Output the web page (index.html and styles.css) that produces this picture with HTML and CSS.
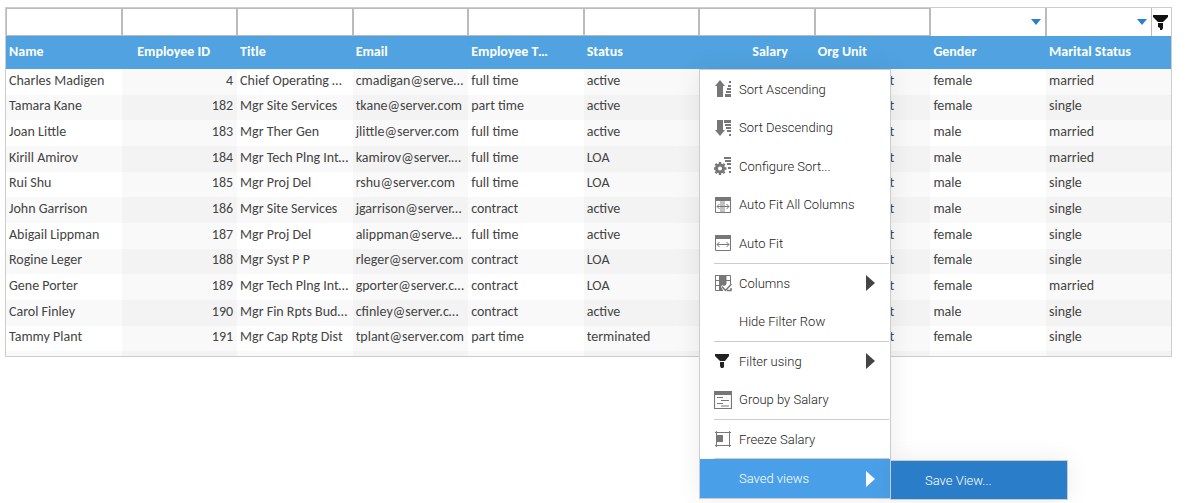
FILE: index.html
```html
<!DOCTYPE html>
<html lang="en">
<head>
    <meta charset="UTF-8">
    <meta name="viewport" content="width=device-width, initial-scale=1.0">
    <title>Employees</title>
    <link rel="stylesheet" href="styles.css">
</head>
<body>
    <div class="grid-wrapper">
        <div class="grid">
            <table>
                <colgroup>
                    <col span="9">
                    <col class="last-col">
                </colgroup>
                <thead>
                    <tr class="filter-row">
                        <td><input type="text" aria-label="Filter Name"></td>
                        <td><input type="text" aria-label="Filter Employee ID"></td>
                        <td><input type="text" aria-label="Filter Title"></td>
                        <td><input type="text" aria-label="Filter Email"></td>
                        <td><input type="text" aria-label="Filter Employee Type"></td>
                        <td><input type="text" aria-label="Filter Status"></td>
                        <td><input type="text" aria-label="Filter Salary"></td>
                        <td><input type="text" aria-label="Filter Org Unit"></td>
                        <td>
                            <div class="select-filter">
                                <select aria-label="Filter Gender">
                                    <option></option>
                                </select>
                                <span class="picker"></span>
                            </div>
                        </td>
                        <td>
                            <div class="last-filter">
                                <div class="select-filter">
                                    <select aria-label="Filter Marital Status">
                                        <option></option>
                                    </select>
                                    <span class="picker"></span>
                                </div>
                                <button type="button" class="filter-button" aria-label="Filter">
                                    <svg width="16" height="16" viewBox="0 0 16 16"><path fill="currentColor" d="M0 1h15v2l-5 5H5L0 3zM5 9h5v5l-1 2H7v-2l-2-1z"/></svg>
                                </button>
                            </div>
                        </td>
                    </tr>
                    <tr class="header-row">
                        <th>Name</th>
                        <th class="number">Employee ID</th>
                        <th>Title</th>
                        <th>Email</th>
                        <th>Employee Type</th>
                        <th>Status</th>
                        <th class="number">Salary</th>
                        <th>Org Unit</th>
                        <th>Gender</th>
                        <th>Marital Status</th>
                    </tr>
                </thead>
                <tbody id="employees"></tbody>
            </table>
        </div>

        <div class="menu">
            <button type="button" class="menu-item">
                <svg class="icon" viewBox="0 0 18 18"><path d="M6 0l5 6H9v11H3V6H1zM15 1h2v2h-2zM14 5h3v2h-3zM13 8h4v2h-4zM12 11h5v2h-5zM11 14h6v3h-6z"/></svg>
                Sort Ascending
            </button>
            <button type="button" class="menu-item">
                <svg class="icon" viewBox="0 0 18 18"><path d="M3 1h6v10h2l-5 6-5-6h2zM10 1h7v3h-7zM11 5h6v2h-6zM12 8h5v2h-5zM13 11h4v2h-4zM15 15h2v2h-2z"/></svg>
                Sort Descending
            </button>
            <button type="button" class="menu-item">
                <svg class="icon" viewBox="0 0 18 18"><path d="M10 0h7v2h-7zM11 3h6v2h-6zM13 6h4v2h-4zM14 10h3v2h-3zM15 14h2v2h-2z"/><circle cx="6" cy="11.500" r="3.500" fill="none" stroke="currentColor" stroke-width="3"/><path d="M6 5v3M6 15v3M-.5 11.500h3M9.500 11.500h3M1.400 6.900l2.100 2.100M8.500 14l2.100 2.100M1.400 16.100L3.500 14M8.500 9l2.100-2.100" fill="none" stroke="currentColor" stroke-width="2.400"/></svg>
                Configure Sort...
            </button>
            <button type="button" class="menu-item">
                <svg class="icon" viewBox="0 0 18 18"><path d="M1 1h16v4H1z"/><path d="M6 5h5v12H6z" opacity=".45"/><path d="M1.500 4v12.500h15V4M3 10.500h12M5.500 8L3 10.500 5.500 13M12.500 8l2.500 2.500-2.500 2.500" fill="none" stroke="currentColor"/></svg>
                Auto Fit All Columns
            </button>
            <button type="button" class="menu-item">
                <svg class="icon" viewBox="0 0 18 18"><path d="M1 1h16v4H1z"/><path d="M1.500 4v12.500h15V4M3 10.500h12M5.500 8L3 10.500 5.500 13M12.500 8l2.500 2.500-2.500 2.500" fill="none" stroke="currentColor"/></svg>
                Auto Fit
            </button>
            <hr>
            <button type="button" class="menu-item">
                <svg class="icon" viewBox="0 0 18 18"><path d="M5 1h7v10l-2 1-2-1-1 2 2 3v1H5z"/><path d="M1.500 1.500h15V10M1.500 1v15.500H6M1 6.500h4M1 11.500h4M12 6.500h5M12 1v9" fill="none" stroke="currentColor"/><path d="M8 12.500l3.500 4 6-6.500M13 16.500h4V14" fill="none" stroke="currentColor" stroke-width="1.500"/></svg>
                Columns
                <span class="arrow"></span>
            </button>
            <button type="button" class="menu-item">
                <span class="icon"></span>
                Hide Filter Row
            </button>
            <hr>
            <button type="button" class="menu-item">
                <svg class="icon dark" viewBox="0 0 18 18"><path d="M1 2h14v2l-4 5H6L1 4zM6 10h4v5l-1 1H7l-1-2z"/></svg>
                Filter using
                <span class="arrow"></span>
            </button>
            <button type="button" class="menu-item">
                <svg class="icon" viewBox="0 0 18 18"><path d="M0 0h18v4H0z"/><path d="M.5 3v14.500h17V3M3 6.500h6M7 9.500h8M3 12.500h6M7 15h8" fill="none" stroke="currentColor" stroke-width="1.200"/></svg>
                Group by Salary
            </button>
            <hr>
            <button type="button" class="menu-item">
                <svg class="icon" viewBox="0 0 18 18"><path d="M3 5h6v7H3z"/><path d="M2.500 1v16M15.500 1v16M1 2.500h16M1 15.500h16" fill="none" stroke="currentColor"/></svg>
                Freeze Salary
            </button>
            <hr>
            <button type="button" class="menu-item selected">
                <span class="icon"></span>
                Saved views
                <span class="arrow"></span>
            </button>
            <div class="submenu">
                <button type="button" class="submenu-item">Save View...</button>
            </div>
        </div>
    </div>

    <script>
        const employees = [
            ['Charles Madigen', 4, 'Chief Operating Officer', 'cmadigan@server.com', 'full time', 'active', 'female', 'married'],
            ['Tamara Kane', 182, 'Mgr Site Services', 'tkane@server.com', 'part time', 'active', 'female', 'single'],
            ['Joan Little', 183, 'Mgr Ther Gen', 'jlittle@server.com', 'full time', 'active', 'male', 'married'],
            ['Kirill Amirov', 184, 'Mgr Tech Plng Integration', 'kamirov@server.com', 'full time', 'LOA', 'male', 'married'],
            ['Rui Shu', 185, 'Mgr Proj Del', 'rshu@server.com', 'full time', 'LOA', 'male', 'single'],
            ['John Garrison', 186, 'Mgr Site Services', 'jgarrison@server.com', 'contract', 'active', 'male', 'single'],
            ['Abigail Lippman', 187, 'Mgr Proj Del', 'alippman@server.com', 'full time', 'active', 'female', 'single'],
            ['Rogine Leger', 188, 'Mgr Syst P P', 'rleger@server.com', 'contract', 'LOA', 'female', 'single'],
            ['Gene Porter', 189, 'Mgr Tech Plng Integration', 'gporter@server.com', 'contract', 'LOA', 'female', 'married'],
            ['Carol Finley', 190, 'Mgr Fin Rpts Budgets', 'cfinley@server.com', 'contract', 'active', 'male', 'single'],
            ['Tammy Plant', 191, 'Mgr Cap Rptg Dist', 'tplant@server.com', 'part time', 'terminated', 'female', 'single'],
            ['', '', '', '', '', '', '', '']
        ];

        const body = document.getElementById('employees');
        employees.forEach((employee) => {
            const row = body.insertRow();
            const values = employee.slice();
            // salary and org unit go in front of gender
            values.splice(6, 0, '', employee[0] ? 'Management' : '');
            values.forEach((value, index) => {
                const cell = row.insertCell();
                cell.textContent = value || '\u00a0';
                if (index === 1 || index === 6) {
                    cell.className = 'number';
                }
            });
        });
    </script>
</body>
</html>
```
FILE: styles.css
```css
* {
    box-sizing: border-box;
}
html {
    height: 100%;
}
body {
    min-height: 100%;
    margin: 0;
    padding: 7px 28px 0 5px;
    font-family: Calibri, Carlito, Lato, sans-serif;
    font-size: 14px;
    color: #444;
    background-color: #fff;
}
button, input, select {
    margin: 0;
    padding: 0;
    font: inherit;
    color: inherit;
    background: none;
    border: none;
    border-radius: 0;
}
.grid-wrapper {
    position: relative;
}
.grid {
    height: 350px;
    overflow: hidden;
    border: 1px solid #ccc;
}
table {
    width: 100%;
    height: 369px;
    table-layout: fixed;
    border-collapse: collapse;
}
.last-col {
    width: 125px;
}
.filter-row td {
    height: 28px;
    padding: 0;
}
.filter-row input {
    display: block;
    width: 100%;
    height: 28px;
    border: 1px solid #bbb;
}
.select-filter {
    display: flex;
    align-items: center;
    flex: 1;
    height: 28px;
    padding-right: 4px;
    border-left: 1px solid #bbb;
    border-right: 1px solid #bbb;
}
.select-filter select {
    flex: 1;
    min-width: 0;
    height: 26px;
    appearance: none;
}
.picker {
    border: 5px solid transparent;
    border-top: 6px solid #2a7fce;
    border-bottom: none;
}
.last-filter {
    display: flex;
}
.filter-button {
    display: flex;
    align-items: center;
    justify-content: center;
    width: 19px;
    padding-right: 2px;
    color: #111;
}
.header-row th {
    height: 33px;
    padding: 0 32px 3px 3px;
    background-color: #50a3e0;
    color: #fff;
    font-weight: bold;
    text-align: left;
}
th, tbody td {
    overflow: hidden;
    text-overflow: ellipsis;
    white-space: nowrap;
}
tbody td {
    padding: 0 4px 3px 3px;
}
tbody tr:nth-child(even), tbody td:nth-child(even) {
    background-color: rgba(0, 0, 0, 0.024);
}
.number, .header-row .number {
    text-align: right;
}
.header-row .number {
    padding-right: 27px;
}
.menu {
    position: absolute;
    top: 62px;
    left: 694px;
    display: flex;
    flex-direction: column;
    width: 192px;
    height: 430px;
    background-color: #fff;
    border: 1px solid #ccc;
    box-shadow: 0 0 24px rgba(0, 0, 0, 0.08);
    font-family: Roboto, sans-serif;
    font-size: 13px;
    font-weight: 300;
    color: #222;
}
.menu hr {
    width: 175px;
    height: 1px;
    margin: 0 1px 0 auto;
    border: none;
    background-color: #ccc;
}
.menu-item {
    display: flex;
    flex: 1;
    align-items: center;
    padding: 0 15px 0 14px;
}
.icon {
    width: 18px;
    height: 18px;
    margin-right: 7px;
    fill: currentColor;
    color: #777;
}
.dark {
    color: #222;
}
.arrow {
    margin-left: auto;
    border: 8px solid transparent;
    border-left: 9px solid #444;
    border-right: none;
}
.selected {
    background-color: #4aa0e8;
    color: #fff;
}
.selected .arrow {
    border-left-color: #fff;
}
.submenu {
    position: absolute;
    bottom: -2px;
    left: 100%;
    width: 178px;
    border: 1px solid #ccc;
    box-shadow: 0 0 24px rgba(0, 0, 0, 0.08);
}
.submenu-item {
    display: block;
    width: 100%;
    height: 38px;
    padding-left: 34px;
    background-color: #2a7dc9;
    color: #fff;
    text-align: left;
}
```
